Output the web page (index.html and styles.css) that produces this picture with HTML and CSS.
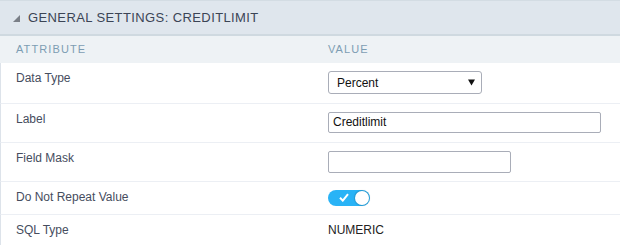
FILE: index.html
```html
<!DOCTYPE html>
<html>
<head>
<meta charset="utf-8">
<link rel="stylesheet" href="styles.css">
</head>
<body>
<div class="panel">
  <div class="panel-head">
    <span class="caret"></span>
    <span class="title">General Settings: Creditlimit</span>
  </div>
  <div class="grid">
    <div class="th">Attribute</div>
    <div class="th th-val">Value</div>

    <div class="cell label r1">Data Type</div>
    <div class="cell val r1">
      <div class="select"><span>Percent</span>
        <svg width="7" height="7" viewBox="0 0 7 7"><path d="M0 0.5H7L3.5 6.5Z" fill="#111"/></svg>
      </div>
    </div>

    <div class="cell label r2">Label</div>
    <div class="cell val r2"><div class="input wide">Creditlimit</div></div>

    <div class="cell label r3">Field Mask</div>
    <div class="cell val r3"><div class="input mid"></div></div>

    <div class="cell label r4">Do Not Repeat Value</div>
    <div class="cell val r4">
      <div class="toggle">
        <svg class="check" width="10" height="9" viewBox="0 0 10 9"><path d="M1 4.8L3.8 7.6L9 1.2" fill="none" stroke="#fff" stroke-width="2"/></svg>
        <span class="knob"></span>
      </div>
    </div>

    <div class="cell label r5 last">SQL Type</div>
    <div class="cell val r5 last plain">NUMERIC</div>
  </div>
</div>
</body>
</html>
```
FILE: styles.css
```css
html, body {
  margin: 0;
  padding: 0;
  background: #fff;
}
body {
  font-family: "Liberation Sans", Arial, sans-serif;
  width: 620px;
  height: 245px;
  overflow: hidden;
}
.panel {
  border-top: 1px solid #d3dce3;
}
.panel-head {
  height: 33px;
  background: #dfe6ed;
  border-bottom: 2px solid #cfd9e0;
  display: flex;
  align-items: center;
  padding-left: 13px;
}
.caret {
  width: 0;
  height: 0;
  border-left: 7px solid transparent;
  border-bottom: 7px solid #7a7f87;
  margin-right: 8px;
  margin-top: 1px;
}
.title {
  font-size: 13px;
  letter-spacing: 0.4px;
  text-transform: uppercase;
  color: #3b4455;
}
.grid {
  display: grid;
  grid-template-columns: 312px 1fr;
}
.th {
  background: #eef2f5;
  height: 27px;
  line-height: 27px;
  font-size: 11px;
  letter-spacing: 1.1px;
  text-transform: uppercase;
  color: #7d9db3;
  padding-left: 16px;
}
.cell {
  padding-left: 16px;
  padding-top: 8px;
  border-bottom: 1px solid #eceff4;
  box-sizing: border-box;
  font-size: 12px;
  line-height: 14px;
}
.label {
  color: #464d5e;
  border-left: 1px solid #dde3ea;
  padding-left: 15px;
}
.label.r1 { padding-top: 8px; }
.r1 { height: 41px; }
.r2 { height: 39px; }
.r3 { height: 39px; }
.r4 { height: 33px; }
.r5 { height: 31px; border-bottom: none; }
.plain { color: #222; }
.select {
  width: 154px;
  height: 23px;
  box-sizing: border-box;
  border: 1px solid #a9adb8;
  border-radius: 3px;
  display: flex;
  align-items: center;
  justify-content: space-between;
  padding: 0 6px 0 8px;
  font-size: 12px;
  color: #111;
}
.input {
  height: 21px;
  box-sizing: border-box;
  border: 1px solid #a9adb8;
  border-radius: 2px;
  font-size: 12px;
  line-height: 19px;
  padding-left: 4px;
  color: #111;
}
.input.wide { width: 273px; }
.input.mid { width: 183px; height: 22px; }
.toggle {
  width: 42px;
  height: 16px;
  border-radius: 8px;
  background: #29b3f6;
  position: relative;
}
.check {
  position: absolute;
  left: 11px;
  top: 3px;
}
.knob {
  position: absolute;
  right: 1px;
  top: 1px;
  width: 14px;
  height: 14px;
  border-radius: 50%;
  background: #fff;
  box-shadow: 0 0 1px 1px rgba(0,0,0,0.15);
}
```
